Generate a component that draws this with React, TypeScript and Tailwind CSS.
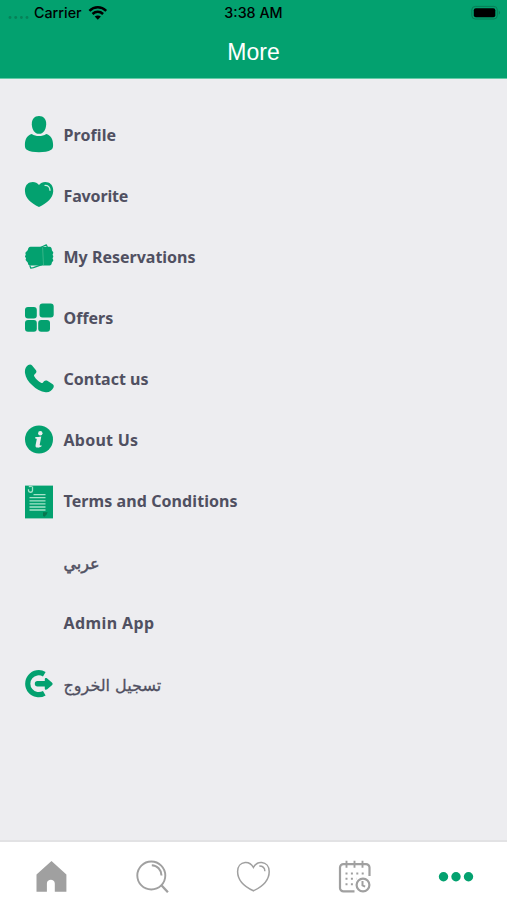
import type { ReactNode } from 'react'

const ProfileIcon = () => (
  <svg width="30" height="38" viewBox="0 0 30 38" fill="currentColor">
    <path d="M15 .1c4.600 0 7.300 3.200 7.200 8.100-.2 5.700-3 9.600-7.200 9.600s-7-3.900-7.200-9.600C7.700 3.300 10.400.1 15 .1Z" />
    <path d="M7.800 17.900C9.800 19.400 12.300 20 15 20s5.200-.6 7.200-2.100c4.600 1.200 6.900 5.200 6.900 11 0 2.400-.5 4-1.900 4.900-2.800 1.800-7.400 2.400-12.200 2.400s-9.400-.6-12.200-2.400C1.400 32.900.9 31.300.9 28.900c0-5.800 2.300-9.800 6.900-11Z" />
  </svg>
)

const FavoriteIcon = () => (
  <svg width="30" height="38" viewBox="0 0 30 38" fill="currentColor">
    <path d="M15 8C12.900 5 8.800 4.400 5.800 5.600 2.300 7 .7 10.400 1 14.400c.4 6.800 5.600 11.300 14 15.500 8.400-4.200 13.700-8.700 14.200-15.500.3-4-1.400-7.400-4.900-8.800-3-1.200-7.200-.6-9.300 2.400Z" />
    <path
      d="M21 8.300c3 0 4.900 2 5 5"
      fill="none"
      stroke="#c9eee0"
      strokeWidth="1.300"
      strokeLinecap="round"
    />
  </svg>
)

const ReservationsIcon = () => (
  <svg width="30" height="38" viewBox="0 0 30 38" fill="currentColor">
    <path
      d="m5.800 27.500 1 2.700 2.600-.6 8.500-3M16.500 9.500l5.800-2.700 1.200 2.600"
      fill="none"
      stroke="currentColor"
      strokeWidth="1.200"
      strokeLinejoin="round"
    />
    <path d="M6.500 8.800h19c1.700 0 2.300 1.600 2.400 3.400.4 1 1.400 1.400 1.400 2.500 0 .9-.7 1.100-.7 1.900s.7 1 .7 1.800-.7 1.100-.7 1.900.7 1.100.7 2c0 1.100-1.200 1.500-1.500 2.500-.2 1.700-.8 2.800-2.300 2.800h-19c-1.500 0-2.400-.9-2.600-2.700-.3-1-1.300-1.500-2.100-2.700-.5-.8.2-1.200.2-2s-1-1-1-1.800.8-1.100.7-1.900-.6-1.100-.1-1.900c.7-1.100 1.900-1.600 2.200-2.500.3-1.900 1.100-3.300 2.700-3.300Z" />
    <path
      d="m18.600 9.300.9 17.900"
      fill="none"
      stroke="#5abf98"
      strokeWidth=".6"
    />
  </svg>
)

const OffersIcon = () => (
  <svg width="30" height="38" viewBox="0 0 30 38" fill="currentColor">
    <rect x="1" y="8" width="11.800" height="11.500" rx="3" />
    <rect x="15.500" y="4.400" width="14.200" height="14" rx="3" />
    <rect x="1" y="21" width="11.800" height="11.800" rx="3" />
    <rect x="14.200" y="21" width="11.800" height="11.800" rx="3" />
  </svg>
)

const ContactIcon = () => (
  <svg width="30" height="38" viewBox="0 0 30 38" fill="currentColor">
    <path d="M4.200 5c1.300-.9 2.900-.8 3.900.4l3.700 4.500c.9 1.100.8 2.400-.1 3.300l-1.200 1.300c-.6.700-.6 1.300-.1 2.100 1.700 2.800 3.700 4.700 6.600 6.200.8.400 1.400.3 2-.4l1-1.100c1-1 2.300-1.100 3.300-.5l5.100 3.300c1.400.9 1.700 2.300 1 3.600-1.500 2.900-4.300 4.900-7.700 4.500-4.900-.5-9.500-3-13.400-7C4.100 21.500 1.600 17.300 1 12.900c-.4-3.300.7-6.200 3.200-7.900Z" />
  </svg>
)

const AboutIcon = () => (
  <svg width="30" height="38" viewBox="0 0 30 38" fill="currentColor">
    <circle cx="15" cy="18.500" r="14" />
    <g fill="#ededf0">
      <circle cx="16.300" cy="12.200" r="2.200" />
      <path d="M11.400 16c1.700 0 3.800-.2 5.900-.6l-1.600 8.300c-.1.800.5 1 1.900.6l-.2 1.300c-1.300.8-2.800 1.200-4 1-1.600-.2-2.100-1.100-1.800-2.700l1.100-5.300c.1-.7-.2-.9-1.600-1l.3-1.600Z" />
    </g>
  </svg>
)

const TermsIcon = () => (
  <svg width="30" height="38" viewBox="0 0 30 38" fill="currentColor">
    <path d="M1 3.600h28v32.800H1z" />
    <path
      d="M8.500 4.600v4c-.2 2.300-4 2.100-4 0V7.200M4.800 4.500l3-.1"
      fill="none"
      stroke="#a5e3ca"
      strokeWidth="1.300"
    />
    <path
      d="M9.500 12.600h12M5.500 15.700h16M5.500 18.800h16M5.500 21.900h16M5.500 25h16M5.500 28h16"
      fill="none"
      stroke="#a5e3ca"
      strokeWidth="1.300"
    />
    <path d="M19 30.300h4.700l-1.100 2.300-2.100 2.200-1.500-.9z" fill="#08764f" />
  </svg>
)

const LogoutIcon = () => (
  <svg width="30" height="38" viewBox="0 0 30 38" fill="none">
    <path
      d="M20.300 9.200A11 11 0 1 0 20.300 28.200"
      stroke="currentColor"
      strokeWidth="5.200"
    />
    <path
      d="M13.500 16.100h7.300v-1.700c0-1.400 1.200-1.800 2.400-.9l4.700 4c1 .9 1 1.900 0 2.800l-4.700 4c-1.200.9-2.400.5-2.400-.9v-1.900h-7.300a2.700 2.700 0 0 1 0-5.400Z"
      fill="currentColor"
    />
  </svg>
)

const HomeTab = () => (
  <svg width="36" height="36" viewBox="0 0 36 36">
    <path
      d="M18.500 2 33.400 15.400V32.800H21.800v-8.300c0-5-7.900-5-7.900 0v8.300H3.500V15.400Z"
      fill="#a0a0a0"
    />
  </svg>
)

const SearchTab = () => (
  <svg
    width="36"
    height="36"
    viewBox="0 0 36 36"
    fill="none"
    stroke="#a0a0a0"
    strokeWidth="1.900"
  >
    <circle cx="17.300" cy="16.500" r="14" />
    <path d="M17.800 6.300c5.500.2 9.500 4.400 9.700 10.200" strokeWidth="2" />
    <path d="m27.400 26.300 6.500 7" strokeWidth="2.300" />
  </svg>
)

const HeartTab = () => (
  <svg
    width="36"
    height="36"
    viewBox="0 0 36 36"
    fill="none"
    stroke="#a0a0a0"
    strokeWidth="1.500"
  >
    <path d="M18.400 8.400C16.200 4.600 13.100 3.200 10.100 3.500 5.700 3.900 2.600 7.400 2.600 12.500 2.600 20.700 8.800 27.400 18.400 31.800c9.600-4.400 15.800-11.100 15.800-19.300 0-5.100-3.100-8.600-7.500-9-3-.3-6.100 1.100-8.300 4.900Z" />
    <path d="M24.300 7c3.400 0 5.500 2 5.600 5.300" strokeWidth="1.400" />
  </svg>
)

const CalendarTab = () => (
  <svg width="36" height="36" viewBox="0 0 36 36" fill="none" stroke="#a0a0a0">
    <path d="M17.500 32.400H6.500a3.500 3.500 0 0 1-3.500-3.500V8.600a3.500 3.500 0 0 1 3.500-3.500h22.500a3.500 3.500 0 0 1 3.500 3.500v8.500" strokeWidth="2.200" />
    <path d="M9.500 1.800v7M17.500 1.800v7M25.500 1.800v7" strokeWidth="1.900" />
    <path
      d="M8.500 14.500h19M8.500 19.800h11M8.500 25.200h9"
      strokeWidth="2"
      strokeDasharray="2 3.400"
    />
    <circle cx="26" cy="26" r="6.400" strokeWidth="2.200" />
    <path d="M25.500 22v4.300l2.600 1.300" strokeWidth="2" />
  </svg>
)

const MoreTab = () => (
  <svg width="36" height="36" viewBox="0 0 36 36" fill="#03a16f">
    <circle cx="5.500" cy="17.700" r="4.700" />
    <circle cx="18" cy="17.700" r="4.700" />
    <circle cx="30.500" cy="17.700" r="4.700" />
  </svg>
)

const StatusBar = () => (
  <div className="grid h-[26px] grid-cols-3 items-center text-black">
    <div className="flex items-center pl-2">
      <svg width="22" height="26" viewBox="0 0 22 26" fill="#078158">
        <circle cx="2" cy="17.500" r="1.400" />
        <circle cx="7.700" cy="17.500" r="1.400" />
        <circle cx="13.400" cy="17.500" r="1.400" />
        <circle cx="19" cy="17.500" r="1.400" />
      </svg>
      <span className="ml-1 text-[14.300px] font-medium">Carrier</span>
      <svg
        className="ml-1.5"
        width="20"
        height="26"
        viewBox="0 0 20 26"
        fill="none"
        stroke="#000"
        strokeWidth="2.500"
      >
        <path d="M1.400 10.800c4.900-4.600 11.900-4.600 16.800 0M4.500 14c3.200-2.900 7.400-2.900 10.600 0" />
        <path d="M9.800 19.700 6.700 16.600c1.800-1.500 4.400-1.500 6.200 0Z" fill="#000" stroke="none" />
      </svg>
    </div>
    <span className="text-center text-[14.300px] font-medium">3:38 AM</span>
    <svg
      className="mr-1.5 justify-self-end"
      width="30"
      height="26"
      viewBox="0 0 30 26"
    >
      <rect x=".8" y="6.400" width="25.500" height="12.600" rx="3.500" fill="none" stroke="#087d56" />
      <rect x="2.800" y="8.200" width="21.500" height="9" rx="2" />
      <path d="M27.800 10.800c1.700.5 1.700 3.300 0 3.800Z" fill="#087d56" />
    </svg>
  </div>
)

interface MenuItem {
  label: string
  icon?: ReactNode
  arabic?: boolean
  className?: string
}

const menuItems: MenuItem[] = [
  { label: 'Profile', icon: <ProfileIcon />, className: 'tracking-[0.1px]' },
  { label: 'Favorite', icon: <FavoriteIcon />, className: 'tracking-[-0.15px]' },
  { label: 'My Reservations', icon: <ReservationsIcon /> },
  { label: 'Offers', icon: <OffersIcon /> },
  { label: 'Contact us', icon: <ContactIcon /> },
  { label: 'About Us', icon: <AboutIcon />, className: 'tracking-[0.25px]' },
  {
    label: 'Terms and Conditions',
    icon: <TermsIcon />,
    className: 'tracking-[0.08px]',
  },
  {
    label: 'عربي',
    arabic: true,
    className: '[-webkit-text-stroke:0.5px_#505061]',
  },
  { label: 'Admin App', className: 'tracking-[0.4px]' },
  {
    label: 'تسجيل الخروج',
    icon: <LogoutIcon />,
    arabic: true,
    className: '[-webkit-text-stroke:0.3px_#505061]',
  },
]

export default function App() {
  return (
    <div className="flex h-[900px] w-full flex-col bg-[#ededf0] font-['Inter','Liberation_Sans',sans-serif]">
      <header className="h-[79px] border-b border-[#65caa7] bg-[#03a16f]">
        <StatusBar />
        <h1 className="pt-2 text-center font-['Liberation_Sans',sans-serif] text-[23px] leading-9 text-white">
          More
        </h1>
      </header>
      <main className="flex-1 pt-[25px]">
        <ul>
          {menuItems.map((item) => (
            <li key={item.label} className="flex h-[61px] items-center pl-6">
              <div className="w-[39.500px] text-[#03a16f]">{item.icon}</div>
              {item.arabic ? (
                <span
                  dir="rtl"
                  className={`pt-[4px] font-['DejaVu_Sans',sans-serif] text-[16px] text-[#505061] ${item.className}`}
                >
                  {item.label}
                </span>
              ) : (
                <span
                  className={`pt-px font-['Noto_Sans',sans-serif] text-[16px] font-bold text-[#505061] ${item.className ?? ''}`}
                >
                  {item.label}
                </span>
              )}
            </li>
          ))}
        </ul>
      </main>
      <nav className="grid h-[60px] grid-cols-5 items-center justify-items-center border-t-2 border-[#e2e2e4] bg-white pt-3">
        <HomeTab />
        <SearchTab />
        <HeartTab />
        <CalendarTab />
        <MoreTab />
      </nav>
    </div>
  )
}
